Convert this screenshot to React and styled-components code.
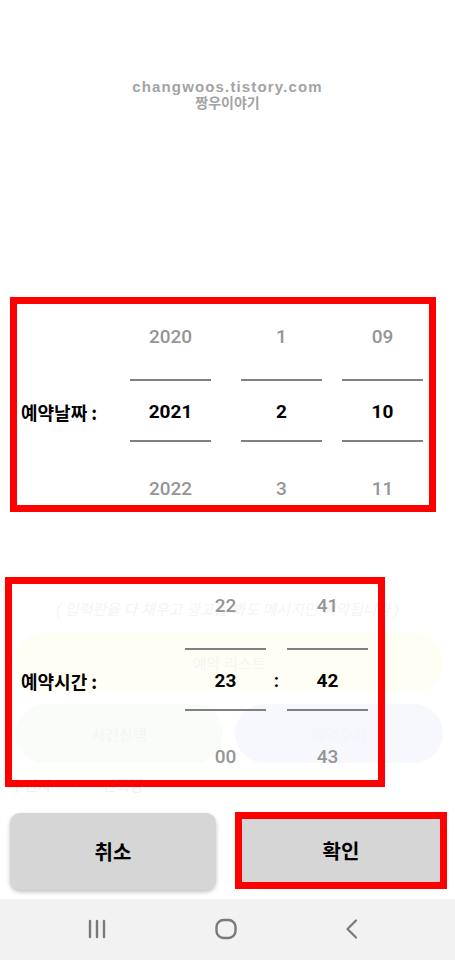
import React from 'react'
import styled, { createGlobalStyle } from 'styled-components'

const GlobalStyle = createGlobalStyle`
  html, body {
    margin: 0;
    padding: 0;
    background: #ffffff;
  }
  * {
    box-sizing: border-box;
  }
`

const Screen = styled.div`
  position: relative;
  width: 455px;
  height: 960px;
  overflow: hidden;
  background: #ffffff;
  font-family: Roboto, "Noto Sans CJK KR", sans-serif;
`

// the app behind the dialog, washed out almost to white
const Backdrop = styled.div`
  position: absolute;
  inset: 0;
  display: flex;
  flex-direction: column;
  padding-top: 598px;
  pointer-events: none;
`
const FaintNote = styled.div`
  text-align: center;
  font-size: 15px;
  font-style: italic;
  color: #f4f4f4;
  height: 34px;
`
const FaintPill = styled.div`
  height: ${p => p.$h}px;
  border-radius: 30px;
  background: ${p => p.$bg};
  display: flex;
  align-items: center;
  justify-content: center;
  color: #f5f5f5;
  font-size: 15px;
  flex: ${p => p.$grow || 'none'};
`
const FaintRow = styled.div`
  display: flex;
  gap: 12px;
  padding: 0 12px 0 15px;
  margin-bottom: 11px;
`
const FaintLabel = styled.div`
  padding-left: 10px;
  font-size: 15px;
  color: #f0f0f0;
  word-spacing: 20px;
`

const Content = styled.div`
  position: relative;
  z-index: 1;
  display: flex;
  flex-direction: column;
  height: 100%;
`

const Header = styled.div`
  height: 297px;
  padding-top: 79px;
  display: flex;
  flex-direction: column;
  align-items: center;
  color: #a3a3a3;
  font-weight: 700;
`
const Site = styled.div`
  font-family: "Liberation Sans", Arial, sans-serif;
  font-size: 15px;
  line-height: 16px;
  letter-spacing: 1.15px;
`
const Blog = styled.div`
  font-family: "Noto Sans CJK KR", sans-serif;
  font-size: 14px;
  line-height: 15px;
`

const MarkBox = styled.div`
  border: 7px solid #ff0000;
  margin-left: ${p => p.$left}px;
  width: ${p => p.$w}px;
  height: ${p => p.$h}px;
  margin-bottom: ${p => p.$after}px;
  display: flex;
  padding-left: ${p => p.$pad}px;
`

const Label = styled.div`
  width: ${p => p.$w}px;
  margin-top: ${p => p.$top}px;
  height: ${p => p.$h}px;
  padding-top: 2px;
  display: flex;
  align-items: center;
  font-family: "Noto Sans CJK KR", sans-serif;
  font-weight: 700;
  font-size: 18px;
  color: #000;
`

const Wheel = styled.div`
  width: 81px;
  margin-left: ${p => p.$gap || 0}px;
  display: grid;
  grid-template-rows: ${p => p.$rows};
`
const Cell = styled.div`
  display: flex;
  align-items: center;
  justify-content: center;
  font-size: 19px;
  font-weight: ${p => (p.$active ? 700 : 500)};
  color: ${p => (p.$active ? '#000' : '#959595')};
  padding-top: ${p => p.$pt || 0}px;
  padding-bottom: ${p => p.$pb || 0}px;
  ${p => p.$active && `
    border-top: 2px solid #808080;
    border-bottom: 2px solid #808080;
  `}
`
const Colon = styled.div`
  width: 21px;
  margin-top: ${p => p.$top}px;
  height: ${p => p.$h}px;
  padding-top: 2px;
  display: flex;
  align-items: center;
  justify-content: center;
  font-size: 19px;
  font-weight: 700;
`

const ButtonRow = styled.div`
  display: flex;
  align-items: flex-start;
  height: 78px;
  padding-left: 10px;
  gap: 19px;
  margin-bottom: 9px;
`
const DialogButton = styled.button`
  border: none;
  width: ${p => p.$w}px;
  height: ${p => p.$h}px;
  margin-top: ${p => p.$top || 0}px;
  border-radius: ${p => p.$radius || 0}px;
  background: #d6d6d6;
  box-shadow: ${p => (p.$shadow ? '0 2px 4px rgba(0,0,0,0.25)' : 'none')};
  font-family: "Noto Sans CJK KR", sans-serif;
  font-weight: 700;
  font-size: 20px;
  color: #000;
  cursor: pointer;
`
const Highlight = styled.div`
  border: 7px solid #ff0000;
  width: 212px;
  height: 77px;
  display: flex;
`

const NavBar = styled.div`
  flex: 1;
  background: #f2f2f2;
  display: flex;
  align-items: center;
  justify-content: space-between;
  padding: 0 95px 2px 86px;
`

const dateRows = '75px 63px 62px'
const timeRows = '64px 63px 69px'

const Picker = ({ values, rows, gap, pads }) => (
  <Wheel $rows={rows} $gap={gap}>
    <Cell $pb={pads[0]}>{values[0]}</Cell>
    <Cell $active $pt={2}>{values[1]}</Cell>
    <Cell $pt={pads[1]}>{values[2]}</Cell>
  </Wheel>
)

export default function App() {
  return (
    <>
      <GlobalStyle />
      <Screen>
        <Backdrop>
          <FaintNote>( 입력란을 다 채우고 광고를 봐도 메시지만 예약됩니다 )</FaintNote>
          <FaintRow>
            <FaintPill $h={61} $bg="#fffef4" $grow={1}>예약 리스트</FaintPill>
          </FaintRow>
          <FaintRow>
            <FaintPill $h={59} $bg="#f9fcf8" $grow={1}>사진선택</FaintPill>
            <FaintPill $h={59} $bg="#f7f8fe" $grow={1}>예약추가</FaintPill>
          </FaintRow>
          <FaintLabel>수신자 : 단톡방</FaintLabel>
        </Backdrop>

        <Content>
          <Header>
            <Site>changwoos.tistory.com</Site>
            <Blog>짱우이야기</Blog>
          </Header>

          <MarkBox $left={10} $w={426} $h={215} $after={65} $pad={4}>
            <Label $w={109} $top={75} $h={63}>예약날짜 :</Label>
            <Picker values={['2020', '2021', '2022']} rows={dateRows} pads={[11, 30]} />
            <Picker values={['1', '2', '3']} rows={dateRows} gap={30} pads={[11, 30]} />
            <Picker values={['09', '10', '11']} rows={dateRows} gap={20} pads={[11, 30]} />
          </MarkBox>

          <MarkBox $left={5} $w={380} $h={210} $after={25} $pad={9}>
            <Label $w={164} $top={64} $h={63}>예약시간 :</Label>
            <Picker values={['22', '23', '00']} rows={timeRows} pads={[22, 21]} />
            <Colon $top={64} $h={63}>:</Colon>
            <Picker values={['41', '42', '43']} rows={timeRows} pads={[22, 21]} />
          </MarkBox>

          <ButtonRow>
            <DialogButton $w={206} $h={77} $top={1} $radius={10} $shadow>취소</DialogButton>
            <Highlight>
              <DialogButton $w={198} $h={63}>확인</DialogButton>
            </Highlight>
          </ButtonRow>

          <NavBar>
            <svg width="22" height="22" viewBox="0 0 22 22">
              <g stroke="#7a7a7a" strokeWidth="2.4" strokeLinecap="round">
                <line x1="4" y1="3" x2="4" y2="19" />
                <line x1="11" y1="3" x2="11" y2="19" />
                <line x1="18" y1="3" x2="18" y2="19" />
              </g>
            </svg>
            <svg width="24" height="22" viewBox="0 0 24 22">
              <rect x="2.5" y="2" width="19" height="18" rx="7" fill="none" stroke="#7a7a7a" strokeWidth="2.4" />
            </svg>
            <svg width="16" height="22" viewBox="0 0 16 22">
              <polyline points="12,2.5 3.5,11 12,19.5" fill="none" stroke="#7a7a7a" strokeWidth="2.2" strokeLinecap="round" strokeLinejoin="round" />
            </svg>
          </NavBar>
        </Content>
      </Screen>
    </>
  )
}
